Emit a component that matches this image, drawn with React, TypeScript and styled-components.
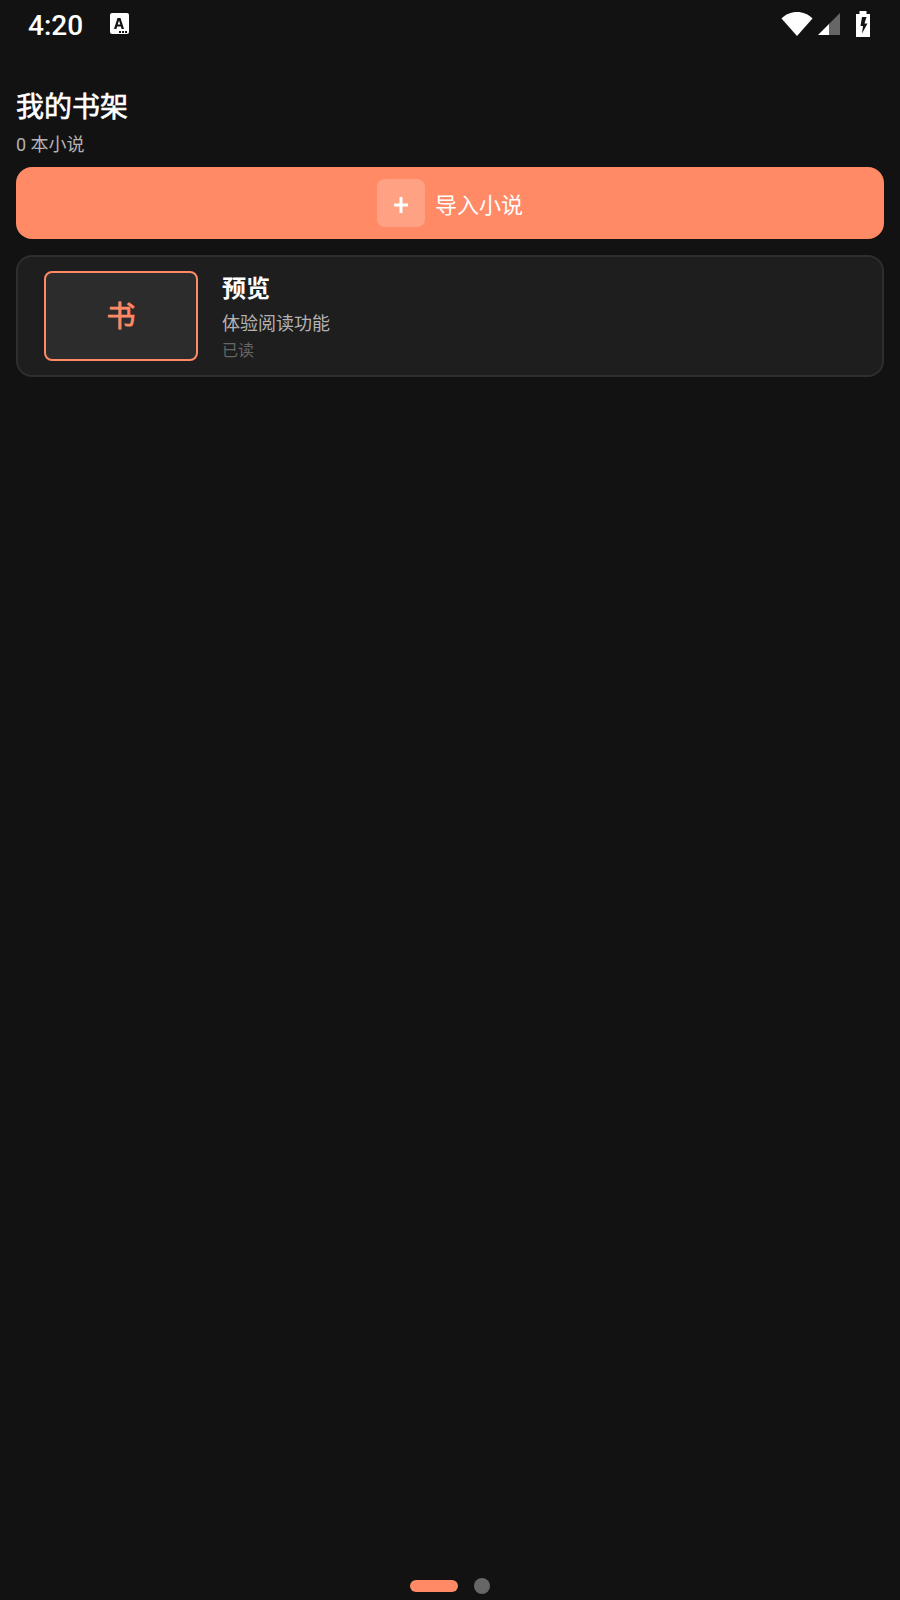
import React from "react";
import styled, { createGlobalStyle } from "styled-components";

const CJK = `Roboto, "Noto Sans CJK SC", sans-serif`;

const GlobalStyle = createGlobalStyle`
  html, body {
    margin: 0;
    padding: 0;
    background: #121212;
  }
  body {
    font-family: ${CJK};
  }
`;

const Screen = styled.div`
  width: 900px;
  height: 1600px;
  display: flex;
  flex-direction: column;
  background: #121212;
  overflow: hidden;
`;

const StatusBar = styled.div`
  height: 48px;
  flex: none;
  display: flex;
  align-items: center;
  justify-content: space-between;
  padding: 0 29px 0 28px;
`;

const StatusLeft = styled.div`
  display: flex;
  align-items: center;
  gap: 26px;
`;

const Clock = styled.span`
  padding-top: 3px;
  font-size: 28px;
  font-weight: 500;
  color: #fff;
  line-height: 45px;
`;

const StatusRight = styled.div`
  display: flex;
  align-items: center;
`;

const SignalSlot = styled.div`
  display: flex;
  margin: 0 14px 0 4px;
`;

const Content = styled.main`
  flex: 1;
  display: flex;
  flex-direction: column;
  padding: 40px 16px 0;
`;

const Title = styled.h1`
  margin: 0;
  font-size: 28px;
  font-weight: 400;
  line-height: 40px;
  color: #fff;
  -webkit-text-stroke: 0.6px #fff;
`;

const Count = styled.div`
  margin-top: 4px;
  font-size: 18px;
  line-height: 25px;
  color: #b3b3b3;
`;

const ImportButton = styled.div`
  margin-top: 10px;
  height: 72px;
  border-radius: 16px;
  background: #ff8a65;
  display: flex;
  align-items: center;
  justify-content: center;
  gap: 10px;
`;

const PlusBox = styled.div`
  width: 48px;
  height: 48px;
  padding-top: 3px;
  box-sizing: border-box;
  border-radius: 8px;
  background: rgba(255, 255, 255, 0.2);
  display: flex;
  align-items: center;
  justify-content: center;
`;

const ImportLabel = styled.span`
  font-size: 22px;
  color: #fff;
`;

const BookCard = styled.div`
  margin-top: 16px;
  height: 122px;
  box-sizing: border-box;
  border: 2px solid #2e2e2e;
  border-radius: 16px;
  background: #1e1e1e;
  display: flex;
  align-items: center;
  padding: 0 26px;
  gap: 24px;
`;

const Cover = styled.div`
  width: 154px;
  height: 90px;
  box-sizing: border-box;
  border: 2px solid #ff8a65;
  border-radius: 8px;
  background: #2c2c2c;
  display: flex;
  align-items: center;
  justify-content: center;
  padding-bottom: 4px;
  font-size: 29px;
  font-weight: 400;
  color: #ff8a65;
  -webkit-text-stroke: 0.7px #ff8a65;
`;

const BookInfo = styled.div`
  display: flex;
  flex-direction: column;
  padding-top: 3px;
`;

const BookTitle = styled.div`
  font-size: 24px;
  font-weight: 700;
  line-height: 32px;
  color: #fff;
`;

const BookDesc = styled.div`
  margin-top: 5px;
  font-size: 18px;
  line-height: 27px;
  color: #b3b3b3;
`;

const BookState = styled.div`
  margin-top: 2px;
  font-size: 16px;
  line-height: 23px;
  color: #666;
`;

const Pager = styled.div`
  flex: none;
  height: 22px;
  display: flex;
  align-items: flex-start;
  justify-content: center;
  gap: 16px;
`;

const PagerPill = styled.div`
  width: 48px;
  height: 12px;
  margin-top: 2px;
  border-radius: 6px;
  background: #ff8a65;
`;

const PagerDot = styled.div`
  width: 16px;
  height: 16px;
  border-radius: 50%;
  background: #666;
`;

const KeyboardIcon = () => (
  <svg width="20" height="22" viewBox="0 0 20 22">
    <rect x="1" y="0" width="19" height="21" rx="2" fill="#fff" />
    <path
      fill="#121212"
      fillRule="evenodd"
      d="M8.500 5h3l3.500 11h-2.400l-.7-2.500h-3.800l-.7 2.500H5zM10 7.500l-1.300 4h2.600z"
    />
    <rect x="10" y="18" width="2" height="2" fill="#121212" />
    <rect x="13" y="18" width="2" height="2" fill="#121212" />
    <rect x="16" y="18" width="2" height="2" fill="#121212" />
  </svg>
);

const WifiIcon = () => (
  <svg width="32" height="26" viewBox="0 0 32 26">
    <path fill="#fff" d="M0.500 7.500C4.500 3.200 10 1 16 1s11.500 2.200 15.500 6.500L16 25z" />
  </svg>
);

const SignalIcon = () => (
  <svg width="24" height="24" viewBox="0 0 24 24">
    <path fill="#666" d="M23 1v22H12V12z" />
    <path fill="#fff" d="M12 12v11H1z" />
  </svg>
);

const BatteryIcon = () => (
  <svg width="16" height="26" viewBox="0 0 16 26">
    <path
      fill="#fff"
      fillRule="evenodd"
      d="M4.500 0h7v3H15v23H1V3h3.500zM7 6h4.500L9.500 12.500h3L7 22.500l1-7.500H5.500z"
    />
  </svg>
);

const PlusIcon = () => (
  <svg width="16" height="16" viewBox="0 0 16 16">
    <path fill="#fff" d="M6.500 0h3v6.500H15v3H9.500V16h-3V9.500H1v-3h5.500z" />
  </svg>
);

const App: React.FC = () => {
  return (
    <Screen>
      <GlobalStyle />
      <StatusBar>
        <StatusLeft>
          <Clock>4:20</Clock>
          <KeyboardIcon />
        </StatusLeft>
        <StatusRight>
          <WifiIcon />
          <SignalSlot>
            <SignalIcon />
          </SignalSlot>
          <BatteryIcon />
        </StatusRight>
      </StatusBar>
      <Content>
        <Title>我的书架</Title>
        <Count>0 本小说</Count>
        <ImportButton>
          <PlusBox>
            <PlusIcon />
          </PlusBox>
          <ImportLabel>导入小说</ImportLabel>
        </ImportButton>
        <BookCard>
          <Cover>书</Cover>
          <BookInfo>
            <BookTitle>预览</BookTitle>
            <BookDesc>体验阅读功能</BookDesc>
            <BookState>已读</BookState>
          </BookInfo>
        </BookCard>
      </Content>
      <Pager>
        <PagerPill />
        <PagerDot />
      </Pager>
    </Screen>
  );
};

export default App;
